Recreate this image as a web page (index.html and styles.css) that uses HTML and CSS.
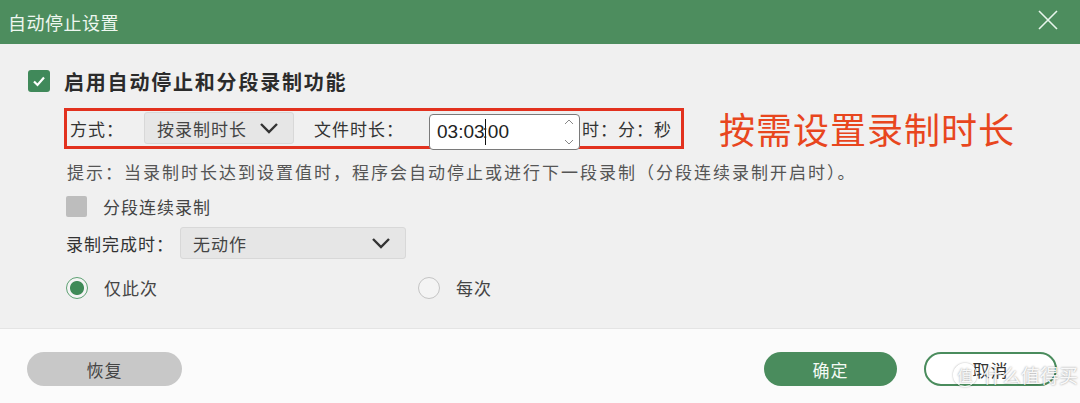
FILE: index.html
```html
<!DOCTYPE html>
<html lang="zh-CN">
<head>
    <meta charset="UTF-8">
    <title>自动停止设置</title>
    <link rel="stylesheet" href="styles.css">
</head>
<body>
    <div class="dialog">
        <div class="titlebar">
            <span class="title">自动停止设置</span>
            <svg class="close" width="22" height="22" viewBox="0 0 22 22">
                <path d="M2 2 L20 20 M20 2 L2 20" stroke="#e8f5ec" stroke-width="1.6" fill="none"/>
            </svg>
        </div>

        <div class="content">
            <div class="main-check">
                <span class="checkbox checked">
                    <svg width="16" height="16" viewBox="0 0 16 16">
                        <path d="M3 8.5 L6.5 12 L13 4.5" stroke="#fff" stroke-width="2.2" fill="none"/>
                    </svg>
                </span>
                <span class="main-label">启用自动停止和分段录制功能</span>
            </div>

            <div class="mode-line">
                <div class="mode-box">
                    <span class="lbl">方式：</span>
                    <div class="select small">
                        <span>按录制时长</span>
                        <svg class="chevron" width="20" height="12" viewBox="0 0 20 12">
                            <path d="M2 2 L10 10 L18 2" stroke="#333" stroke-width="2.4" fill="none"/>
                        </svg>
                    </div>
                    <span class="lbl file-len">文件时长：</span>
                    <div class="time-input">
                        <span class="time-val">03:03<i class="caret"></i><span class="colon">:</span>00</span>
                        <svg class="spin" width="12" height="30" viewBox="0 0 12 30">
                            <path d="M2 7 L6 3 L10 7" stroke="#888" stroke-width="1" fill="none"/>
                            <path d="M2 23 L6 27 L10 23" stroke="#888" stroke-width="1" fill="none"/>
                        </svg>
                    </div>
                    <span class="lbl units">时：分：秒</span>
                </div>
                <span class="note">按需设置录制时长</span>
            </div>

            <p class="hint">提示：当录制时长达到设置值时，程序会自动停止或进行下一段录制（分段连续录制开启时）。</p>

            <div class="option-row">
                <span class="checkbox off"></span>
                <span class="opt-label">分段连续录制</span>
            </div>

            <div class="finish-row">
                <span class="lbl">录制完成时：</span>
                <div class="select wide">
                    <span>无动作</span>
                    <svg class="chevron" width="20" height="12" viewBox="0 0 20 12">
                        <path d="M2 2 L10 10 L18 2" stroke="#333" stroke-width="2.4" fill="none"/>
                    </svg>
                </div>
            </div>

            <div class="radio-row">
                <label class="radio-item">
                    <span class="radio on"></span>
                    <span class="opt-label">仅此次</span>
                </label>
                <label class="radio-item">
                    <span class="radio"></span>
                    <span class="opt-label">每次</span>
                </label>
            </div>
        </div>

        <div class="footer">
            <button class="btn restore">恢复</button>
            <div class="actions">
                <button class="btn ok">确定</button>
                <button class="btn cancel">取消</button>
            </div>
        </div>

        <div class="mark"><span class="mark-logo">值</span>什么值得买</div>
    </div>
</body>
</html>
```

FILE: styles.css
```css
* {
    box-sizing: border-box;
}
body {
    margin: 0;
    font-family: "Noto Sans CJK SC", "Noto Sans", sans-serif;
    color: #333;
    background: #f0f0f0;
}
.dialog {
    position: relative;
    width: 1080px;
    height: 403px;
    display: flex;
    flex-direction: column;
    overflow: hidden;
}
.titlebar {
    height: 44px;
    flex: none;
    background: #4d8d5e;
    display: flex;
    align-items: center;
    justify-content: space-between;
    padding: 0 21px 0 8px;
}
.title {
    color: #eef7f0;
    font-size: 18px;
    letter-spacing: 0.5px;
}
.close {
    margin-top: -4px;
}
.content {
    height: 284px;
    flex: none;
    background: #f0f0f0;
    padding: 26px 0 0 28px;
}
.main-check {
    display: flex;
    align-items: center;
    height: 22px;
}
.checkbox {
    width: 22px;
    height: 22px;
    border-radius: 3px;
    display: inline-flex;
    align-items: center;
    justify-content: center;
    flex: none;
}
.checkbox.checked {
    background: #40895a;
}
.checkbox.off {
    width: 21px;
    height: 21px;
    border-radius: 2px;
    background: #bdbdbd;
}
.main-label {
    margin-left: 14px;
    font-size: 20px;
    font-weight: bold;
    letter-spacing: 1.8px;
    color: #2b2b2b;
}
.mode-line {
    display: flex;
    align-items: center;
    margin: 10px 0 0 36px;
}
.mode-box {
    width: 620px;
    height: 41px;
    border: 3px solid #e2311e;
    display: flex;
    align-items: center;
    padding-left: 3px;
}
.lbl {
    font-size: 17px;
    letter-spacing: 1px;
    color: #333;
}
.select {
    display: flex;
    align-items: center;
    justify-content: space-between;
    height: 32px;
    background: #e6e6e6;
    border: 1px solid #d8d8d8;
    border-radius: 3px;
    font-size: 17px;
    letter-spacing: 1px;
    color: #444;
}
.select.small {
    width: 150px;
    margin-left: 20px;
    padding: 0 14px 0 12px;
}
.select.wide {
    width: 226px;
    margin-left: 6px;
    padding: 0 14px 0 12px;
}
.file-len {
    margin-left: 20px;
}
.time-input {
    width: 151px;
    height: 36px;
    margin: 4px 0 -4px 25px;
    background: #fff;
    border: 1px solid #7a7a7a;
    border-radius: 4px;
    display: flex;
    align-items: center;
    justify-content: space-between;
    padding: 0 4px 0 7px;
}
.time-val {
    font-family: "Liberation Sans", "Noto Sans", sans-serif;
    font-size: 19px;
    color: #222;
    display: flex;
    align-items: center;
}
.caret {
    width: 1px;
    height: 26px;
    background: #111;
}
.colon {
    margin-left: -3px;
}
.units {
    margin-left: 2px;
    letter-spacing: 1px;
}
.note {
    margin-left: 35px;
    font-size: 36px;
    color: #e8461e;
    letter-spacing: 1px;
}
.hint {
    margin: 5px 0 0 39px;
    font-size: 17px;
    letter-spacing: 2px;
    color: #555;
}
.option-row {
    display: flex;
    align-items: center;
    margin: 10px 0 0 38px;
}
.opt-label {
    margin-left: 16px;
    font-size: 17px;
    letter-spacing: 1px;
    color: #444;
}
.finish-row {
    display: flex;
    align-items: center;
    margin: 8px 0 0 38px;
}
.radio-row {
    display: flex;
    align-items: center;
    margin: 16px 0 0 38px;
}
.radio-item {
    display: flex;
    align-items: center;
    width: 352px;
}
.radio {
    width: 22px;
    height: 22px;
    border-radius: 50%;
    border: 1.5px solid #c4c4c4;
    background: #f4f4f4;
    flex: none;
}
.radio.on {
    border-color: #5fa274;
    background: radial-gradient(circle, #3f8a57 0 6.5px, #f4f4f4 7.5px);
}
.footer {
    flex: 1;
    background: #fbfbfb;
    border-top: 1px solid #e4e4e4;
    display: flex;
    align-items: center;
    justify-content: space-between;
    padding: 6px 23px 0 27px;
}
.btn {
    height: 34px;
    width: 133px;
    border-radius: 17px;
    font-family: "Noto Sans CJK SC", sans-serif;
    font-size: 17px;
    letter-spacing: 1px;
    border: none;
}
.restore {
    width: 155px;
    background: #c8c8c8;
    color: #444;
}
.actions {
    display: flex;
    gap: 27px;
}
.ok {
    background: #4a8c5d;
    color: #f4faf5;
}
.cancel {
    background: #fff;
    border: 2px solid #4a8c5d;
    color: #333;
}
.mark {
    position: absolute;
    left: 953px;
    top: 361px;
    display: flex;
    align-items: center;
    font-size: 19px;
    color: rgba(255, 255, 255, 0.92);
    text-shadow: 0 0 2px rgba(0, 0, 0, 0.45);
}
.mark-logo {
    width: 24px;
    height: 24px;
    border-radius: 50%;
    border: 1.5px solid rgba(255, 255, 255, 0.9);
    font-size: 15px;
    display: inline-flex;
    align-items: center;
    justify-content: center;
    margin-right: 6px;
    box-shadow: 0 0 2px rgba(0, 0, 0, 0.35);
}
```
